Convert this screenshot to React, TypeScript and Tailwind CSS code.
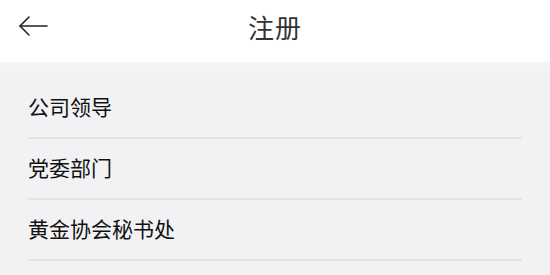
import React from 'react';

const items = ['公司领导', '党委部门', '黄金协会秘书处'];

export default function App() {
  return (
    <div className="w-[550px] h-[275px] overflow-hidden bg-[#f2f1f4] font-['Noto_Sans_CJK_SC','Noto_Sans',sans-serif]">
      <header className="relative h-[62px] bg-white flex items-center justify-center">
        <button className="absolute left-[18px] top-[15px] w-[30px] h-[22px] flex items-center">
          <svg width="30" height="22" viewBox="0 0 30 22" fill="none" stroke="#222" strokeWidth="1.6" strokeLinecap="round" strokeLinejoin="round">
            <path d="M29 11H2" />
            <path d="M11 2L2 11L11 20" />
          </svg>
        </button>
        <h1 className="text-[26px] leading-none text-[#333] tracking-[1px] -mt-[8px]">注册</h1>
      </header>
      <div className="h-[16px] bg-gradient-to-b from-[#f5f5f5] to-[#f2f1f4]" />
      <ul className="pl-[28px] pr-[28px]">
        {items.map((t) => (
          <li key={t} className="h-[61px] flex items-center border-b-2 border-[#e4e3e6] text-[21px] text-[#111] leading-none pb-[2px]">
            {t}
          </li>
        ))}
      </ul>
    </div>
  );
}
